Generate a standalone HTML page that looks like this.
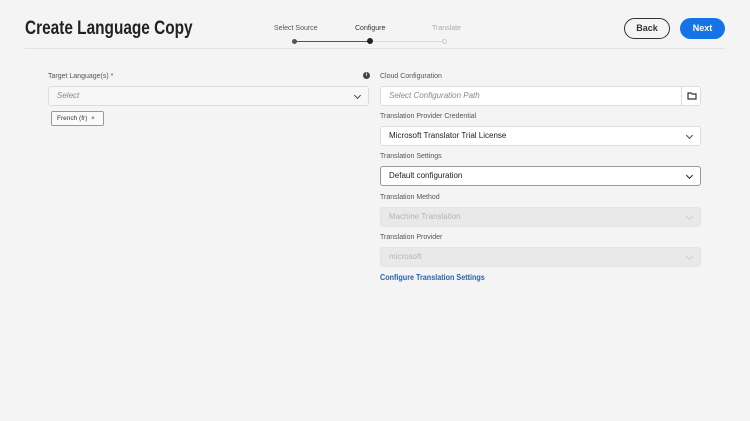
<!DOCTYPE html><html><head><style>
*{box-sizing:border-box;margin:0;padding:0}
body{width:750px;height:421px;background:#f4f4f4;font-family:"Liberation Sans",sans-serif;position:relative;overflow:hidden;color:#333}
.a{position:absolute}
.lbl{position:absolute;font-size:7px;color:#555}
.box{position:absolute;height:20px;border:1px solid #ddd;background:#fff;border-radius:3px;font-size:8px;padding:0 8px;line-height:18px}
.dis{background:#e9e9e9;border-color:#e4e4e4;color:#b5b5b5}
.chev{position:absolute;right:8px;top:6px;width:5px;height:5px;border-right:1.3px solid #444;border-bottom:1.3px solid #444;transform:rotate(45deg)}
.dis .chev{border-color:#ccc}
</style></head><body>
<div class="a" style="left:25px;top:18px;font-size:19px;font-weight:bold;color:#222;transform:scaleX(0.81);transform-origin:left top;white-space:nowrap">Create Language Copy</div>
<div class="a" style="left:25px;top:48px;width:700px;height:1px;background:#e2e2e2"></div>
<div class="a" style="left:274px;top:25px;font-size:7px;color:#555">Select Source</div>
<div class="a" style="left:355px;top:25px;font-size:7px;color:#333">Configure</div>
<div class="a" style="left:432px;top:25px;font-size:7px;color:#aaa">Translate</div>
<div class="a" style="left:295px;top:41px;width:75px;height:1px;background:#555"></div>
<div class="a" style="left:370px;top:41px;width:75px;height:1px;background:#ddd"></div>
<div class="a" style="left:292px;top:39px;width:5px;height:5px;border-radius:50%;background:#555"></div>
<div class="a" style="left:367px;top:38px;width:6px;height:6px;border-radius:50%;background:#222"></div>
<div class="a" style="left:442px;top:39px;width:5px;height:5px;border-radius:50%;border:1px solid #ccc;background:#f4f4f4"></div>
<div class="a" style="left:624px;top:18px;width:46px;height:21px;border:1.5px solid #333;border-radius:11px;font-size:9px;font-weight:bold;text-align:center;line-height:18px">Back</div>
<div class="a" style="left:680px;top:18px;width:45px;height:21px;background:#1473e6;border-radius:11px;font-size:9px;font-weight:bold;color:#fff;text-align:center;line-height:21px">Next</div>

<div class="lbl" style="left:48px;top:73px">Target Language(s) *</div>
<div class="a" style="left:363px;top:72px;width:7px;height:7px;border-radius:50%;background:#444;color:#fff;font-size:5px;text-align:center;line-height:7px;font-weight:bold">i</div>
<div class="box" style="left:48px;top:86px;width:321px;font-style:italic;color:#888;background:#f7f7f7">Select<div class="chev"></div></div>
<div class="a" style="left:51px;top:111px;width:53px;height:15px;border:1px solid #999;border-radius:2px;font-size:6.5px;line-height:13px;padding-left:5px;background:#fafafa">French (fr) &nbsp;×</div>

<div class="lbl" style="left:380px;top:73px">Cloud Configuration</div>
<div class="box" style="left:380px;top:86px;width:321px;font-style:italic;color:#888">Select Configuration Path</div>
<div class="a" style="left:681px;top:86px;width:20px;height:20px;border-left:1px solid #ddd"><svg width="20" height="20"><path d="M6 7h3l1 1h4v5H6z" fill="none" stroke="#333" stroke-width="1.2"/></svg></div>
<div class="lbl" style="left:380px;top:113px">Translation Provider Credential</div>
<div class="box" style="left:380px;top:126px;width:321px;color:#222">Microsoft Translator Trial License<div class="chev"></div></div>
<div class="lbl" style="left:380px;top:153px">Translation Settings</div>
<div class="box" style="left:380px;top:166px;width:321px;color:#222;border-color:#999;font-weight:500">Default configuration<div class="chev" style="border-color:#222"></div></div>
<div class="lbl" style="left:380px;top:194px">Translation Method</div>
<div class="box dis" style="left:380px;top:207px;width:321px">Machine Translation<div class="chev"></div></div>
<div class="lbl" style="left:380px;top:234px">Translation Provider</div>
<div class="box dis" style="left:380px;top:247px;width:321px">microsoft<div class="chev"></div></div>
<div class="a" style="left:380px;top:273px;font-size:8px;color:#2a62b0;font-weight:bold;transform:scaleX(0.9);transform-origin:left top;white-space:nowrap">Configure Translation Settings</div>
</body></html>
